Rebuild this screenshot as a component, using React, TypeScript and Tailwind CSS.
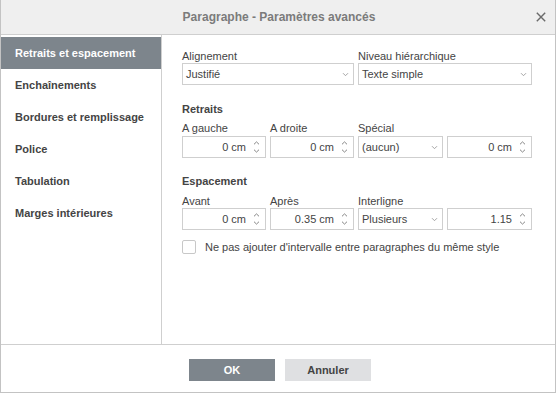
import React from "react";

const font = { fontFamily: '"Liberation Sans", Arial, sans-serif' };

function Chevron() {
  return (
    <svg width="7" height="5" viewBox="0 0 7 5" className="shrink-0">
      <path d="M1 1.2 L3.5 3.7 L6 1.2" fill="none" stroke="#9a9a9a" strokeWidth="0.9" />
    </svg>
  );
}

function Arrows() {
  return (
    <div className="flex flex-col items-center gap-[4px] w-[10px] shrink-0">
      <svg width="7" height="4" viewBox="0 0 7 4">
        <path d="M1 3.3 L3.5 0.9 L6 3.3" fill="none" stroke="#777" strokeWidth="0.9" />
      </svg>
      <svg width="7" height="4" viewBox="0 0 7 4">
        <path d="M1 0.7 L3.5 3.1 L6 0.7" fill="none" stroke="#777" strokeWidth="0.9" />
      </svg>
    </div>
  );
}

function Select({ value }: { value: string }) {
  return (
    <div className="h-[22px] border border-[#cfcfcf] bg-white flex items-center justify-between pl-[3px] pr-[4px] text-[11px] text-[#444]">
      <span>{value}</span>
      <Chevron />
    </div>
  );
}

function Spin({ value }: { value: string }) {
  return (
    <div className="h-[22px] border border-[#cfcfcf] bg-white flex items-center justify-end pr-[4px] gap-[5px] text-[11px] text-[#444]">
      <span>{value}</span>
      <Arrows />
    </div>
  );
}

function Label({ children, bold }: { children: React.ReactNode; bold?: boolean }) {
  return (
    <div className={`h-[14px] leading-[14px] text-[11px] text-[#444] ${bold ? "font-bold" : ""}`}>{children}</div>
  );
}

export default function App() {
  const items = [
    "Retraits et espacement",
    "Enchaînements",
    "Bordures et remplissage",
    "Police",
    "Tabulation",
    "Marges intérieures",
  ];
  return (
    <div style={font} className="w-[556px] h-[393px] bg-white border-x border-b border-[#c3c3c3] flex flex-col">
      <div className="h-[35px] shrink-0 bg-[#efefef] border-b border-[#cfcfcf] relative flex items-center justify-center">
        <span className="text-[12px] font-bold text-[#7b7b7b] pl-[2px]">Paragraphe - Paramètres avancés</span>
        <svg className="absolute right-[9px] top-[12px]" width="10" height="10" viewBox="0 0 10 10">
          <path d="M0.8 0.8 L9.2 9.2 M9.2 0.8 L0.8 9.2" stroke="#6a6a6a" strokeWidth="1.4" />
        </svg>
      </div>
      <div className="flex-1 flex min-h-0">
        <div className="w-[161px] shrink-0 border-r border-[#cfcfcf] pt-[2px]">
          {items.map((t, i) => (
            <div
              key={t}
              className={`h-[32px] flex items-center pl-[14px] text-[11px] font-bold ${
                i === 0 ? "bg-[#7d858c] text-white" : "text-[#444]"
              }`}
            >
              {t}
            </div>
          ))}
        </div>
        <div className="flex-1 pl-[20px] pt-[14px]">
          <div className="grid grid-cols-[84px_84px_85px_85px] gap-x-[4px] w-[350px]">
            <div className="col-span-2">
              <Label>Alignement</Label>
              <Select value="Justifié" />
            </div>
            <div className="col-span-2 pl-[-1px]">
              <Label>Niveau hiérarchique</Label>
              <Select value="Texte simple" />
            </div>
          </div>
          <div className="mt-[17px]">
            <Label bold>Retraits</Label>
          </div>
          <div className="grid grid-cols-[84px_84px_85px_85px] gap-x-[4px] w-[350px] mt-[5px]">
            <div>
              <div className="mb-[1px]"><Label>A gauche</Label></div>
              <Spin value="0 cm" />
            </div>
            <div>
              <div className="mb-[1px]"><Label>A droite</Label></div>
              <Spin value="0 cm" />
            </div>
            <div>
              <div className="mb-[1px]"><Label>Spécial</Label></div>
              <Select value="(aucun)" />
            </div>
            <div className="flex flex-col justify-end">
              <Spin value="0 cm" />
            </div>
          </div>
          <div className="mt-[16px]">
            <Label bold>Espacement</Label>
          </div>
          <div className="grid grid-cols-[84px_84px_85px_85px] gap-x-[4px] w-[350px] mt-[6px]">
            <div>
              <Label>Avant</Label>
              <Spin value="0 cm" />
            </div>
            <div>
              <Label>Après</Label>
              <Spin value="0.35 cm" />
            </div>
            <div>
              <Label>Interligne</Label>
              <Select value="Plusieurs" />
            </div>
            <div className="flex flex-col justify-end">
              <Spin value="1.15" />
            </div>
          </div>
          <div className="mt-[9px] flex items-center gap-[9px]">
            <div className="w-[14px] h-[14px] border border-[#c8c8c8] rounded-[2px] bg-white" />
            <span className="text-[11px] text-[#444]">Ne pas ajouter d'intervalle entre paragraphes du même style</span>
          </div>
        </div>
      </div>
      <div className="h-[48px] shrink-0 border-t border-[#cfcfcf] flex justify-center pt-[14px] gap-[10px] pl-[4px]">
        <div className="w-[86px] h-[22px] bg-[#7d858c] text-white text-[11px] font-bold flex items-center justify-center">OK</div>
        <div className="w-[86px] h-[22px] bg-[#dfe0e2] text-[#444] text-[11px] font-bold flex items-center justify-center">Annuler</div>
      </div>
    </div>
  );
}
